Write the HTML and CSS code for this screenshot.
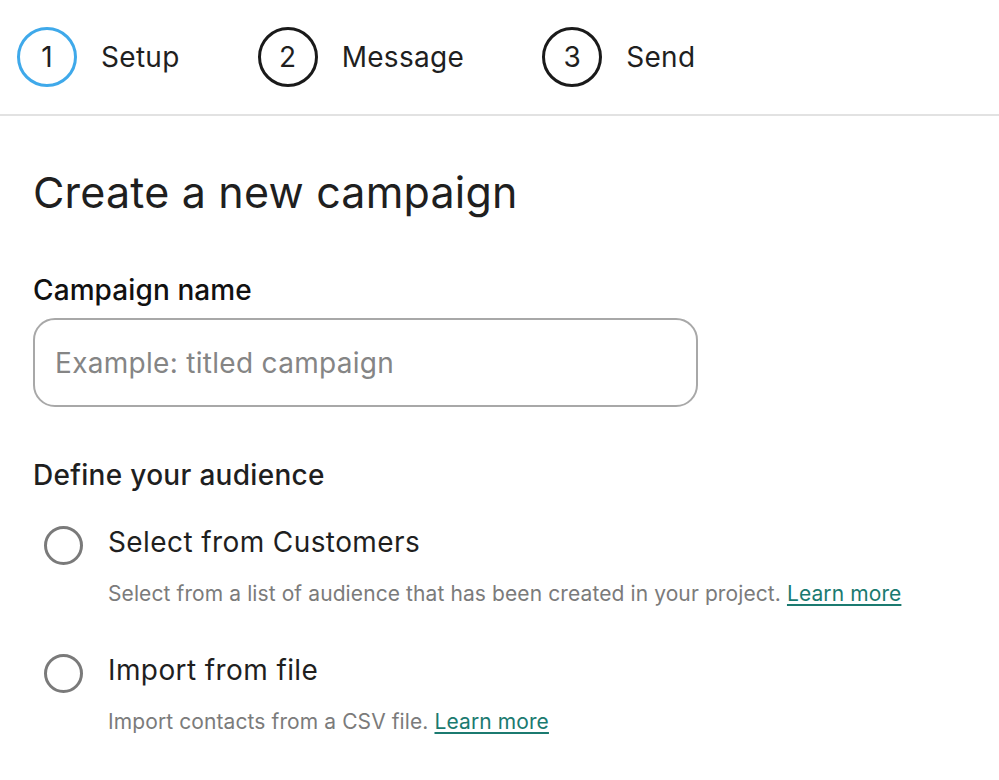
FILE: index.html
```html
<!DOCTYPE html>
<html>
<head>
<meta charset="utf-8">
<link rel="stylesheet" href="styles.css">
</head>
<body>
<nav class="stepper">
  <div class="step active"><span class="num">1</span><span class="label">Setup</span></div>
  <div class="step"><span class="num">2</span><span class="label">Message</span></div>
  <div class="step"><span class="num">3</span><span class="label">Send</span></div>
</nav>
<main class="content">
  <h1 class="title">Create a new campaign</h1>
  <label class="field-label" for="cname">Campaign name</label>
  <input id="cname" class="text-input" type="text" placeholder="Example: titled campaign">
  <h2 class="section-title">Define your audience</h2>
  <div class="options">
    <div class="option">
      <span class="radio"></span>
      <div class="option-body">
        <div class="option-title">Select from Customers</div>
        <div class="option-desc">Select from a list of audience that has been created in your project. <a href="#">Learn more</a></div>
      </div>
    </div>
    <div class="option">
      <span class="radio"></span>
      <div class="option-body">
        <div class="option-title">Import from file</div>
        <div class="option-desc">Import contacts from a CSV file. <a href="#">Learn more</a></div>
      </div>
    </div>
  </div>
</main>
</body>
</html>
```
FILE: styles.css
```css
* { box-sizing: border-box; }
html, body { margin: 0; padding: 0; background: #fff; }
body {
  font-family: Inter, "Noto Sans", "Liberation Sans", sans-serif;
  color: #1f1f1f;
}
.stepper {
  display: flex;
  align-items: center;
  gap: 78px;
  height: 116px;
  padding: 0 0 0 17px;
  border-bottom: 2px solid #e2e2e2;
}
.step {
  display: flex;
  align-items: center;
  gap: 24px;
}
.num {
  width: 60px;
  height: 60px;
  border: 3px solid #1a1a1a;
  border-radius: 50%;
  display: flex;
  align-items: center;
  justify-content: center;
  font-size: 28px;
  color: #1f1f1f;
}
.step.active .num { border-color: #3fa9ea; }
.label {
  font-size: 28px;
  color: #1f1f1f;
  letter-spacing: 0.3px;
}
.content {
  padding: 0 33px;
}
.title {
  margin: 49px 0 0;
  font-size: 43px;
  font-weight: 400;
  line-height: 54px;
  letter-spacing: 0.2px;
  color: #1f1f1f;
}
.field-label {
  display: block;
  margin-top: 54px;
  font-size: 28px;
  font-weight: 500;
  line-height: 34px;
  letter-spacing: 0.1px;
  color: #111;
}
.text-input {
  display: block;
  margin-top: 11px;
  width: 665px;
  height: 89px;
  border: 2px solid #a8a8a8;
  border-radius: 22px;
  padding: 0 20px;
  font-family: inherit;
  font-size: 28px;
  letter-spacing: 0.3px;
  color: #1f1f1f;
  outline: none;
}
.text-input::placeholder { color: #858585; }
.section-title {
  margin: 50px 0 0;
  font-size: 28px;
  font-weight: 500;
  line-height: 36px;
  letter-spacing: 0.3px;
  color: #1f1f1f;
}
.options {
  display: flex;
  flex-direction: column;
  gap: 43px;
  margin-top: 30px;
}
.option {
  display: flex;
  gap: 25px;
  padding-left: 11px;
}
.radio {
  flex: none;
  width: 39px;
  height: 39px;
  border: 3.5px solid #7a7a7a;
  border-radius: 50%;
  margin-top: 2.5px;
}
.option-title {
  font-size: 28px;
  line-height: 38px;
  letter-spacing: 0.4px;
  color: #1f1f1f;
}
.option-desc {
  margin-top: 19px;
  font-size: 21px;
  line-height: 28px;
  letter-spacing: 0.1px;
  color: #7b7b7b;
}
.option-desc a {
  color: #1b7a70;
  text-decoration: underline;
  text-underline-offset: 3px;
}
```
